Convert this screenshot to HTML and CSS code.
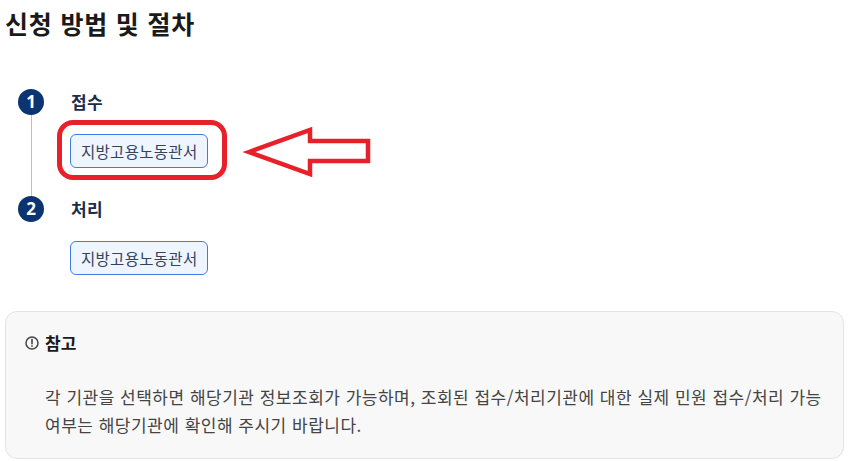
FILE: index.html
```html
<!DOCTYPE html>
<html lang="ko">
<head>
<meta charset="utf-8">
<link rel="stylesheet" href="styles.css">
</head>
<body>
<div class="page">
  <h2 class="title">신청 방법 및 절차</h2>
  <ol class="steps">
    <li class="step">
      <div class="marker"><span class="num">1</span><span class="line"></span></div>
      <div class="content">
        <div class="step-title">접수</div>
        <div class="btn-wrap">
          <button class="org">지방고용노동관서</button>
          <span class="hl-box"></span>
          <svg class="hl-arrow" width="136" height="64" viewBox="0 0 136 64">
            <polygon points="9,32 70,10 70,21 128,21 128,41 70,41 70,54" fill="none" stroke="#e8202a" stroke-width="4.5" stroke-linejoin="miter"/>
          </svg>
        </div>
      </div>
    </li>
    <li class="step last">
      <div class="marker"><span class="num">2</span></div>
      <div class="content">
        <div class="step-title">처리</div>
        <div class="btn-wrap">
          <button class="org">지방고용노동관서</button>
        </div>
      </div>
    </li>
  </ol>
  <div class="note">
    <div class="note-head">
      <svg class="note-icon" width="14" height="14" viewBox="0 0 14 14">
        <circle cx="7" cy="7" r="6" fill="none" stroke="#444" stroke-width="1.5"/>
        <line x1="7" y1="3.6" x2="7" y2="7.8" stroke="#444" stroke-width="1.6" stroke-linecap="round"/>
        <circle cx="7" cy="10.1" r="0.95" fill="#444"/>
      </svg>
      <span class="note-title">참고</span>
    </div>
    <p class="note-text">각 기관을 선택하면 해당기관 정보조회가 가능하며, 조회된 접수/처리기관에 대한 실제 민원 접수/처리 가능 여부는 해당기관에 확인해 주시기 바랍니다.</p>
  </div>
</div>
</body>
</html>
```
FILE: styles.css
```css
* { box-sizing: border-box; }
html, body { margin: 0; padding: 0; background: #fff; }
body {
  font-family: "Noto Sans CJK KR", "Noto Sans", sans-serif;
  color: #222;
}
.page {
  padding: 6px 4px 0 5px;
}
.title {
  margin: 0;
  font-size: 25px;
  line-height: 34px;
  font-weight: 700;
  color: #1a1a1a;
  letter-spacing: 0.8px;
}
.steps {
  list-style: none;
  margin: 49px 0 0 0;
  padding: 0 0 0 13px;
}
.step {
  display: flex;
  padding-bottom: 28px;
}
.step.last { padding-bottom: 0; }
.marker {
  width: 26px;
  display: flex;
  flex-direction: column;
  align-items: center;
  flex-shrink: 0;
}
.num {
  width: 26px;
  height: 26px;
  border-radius: 50%;
  background: #0b3470;
  color: #fff;
  font-weight: 700;
  font-size: 17px;
  line-height: 26px;
  text-align: center;
  font-family: "Noto Sans", "Noto Sans CJK KR", sans-serif;
}
.line {
  flex: 1;
  width: 1px;
  background: #b9c1cc;
  margin-bottom: -28px;
}
.content {
  margin-left: 27px;
}
.step-title {
  height: 26px;
  line-height: 26px;
  font-size: 17px;
  font-weight: 700;
  color: #1b2b4c;
  letter-spacing: 0.3px;
}
.btn-wrap {
  position: relative;
  margin-top: 19px;
  margin-left: -1px;
  display: inline-block;
}
.org {
  display: block;
  height: 34px;
  padding: 0 10px;
  border: 1px solid #3f7de3;
  border-radius: 6px;
  background: #eef5ff;
  color: #34435f;
  font-family: "Noto Sans CJK KR", sans-serif;
  font-size: 15.5px;
  letter-spacing: 0.3px;
  line-height: 32px;
}
.hl-box {
  position: absolute;
  left: -13px;
  top: -14px;
  right: -19px;
  bottom: -12px;
  border: 5px solid #e8202a;
  border-radius: 16px;
}
.hl-arrow {
  position: absolute;
  left: 170px;
  top: -14px;
}
.note {
  margin-top: 36px;
  border: 1px solid #e3e3e3;
  border-radius: 12px;
  background: #f8f8f8;
  padding: 18px 19px 19px 19px;
  height: 148px;
}
.note-head {
  display: flex;
  align-items: center;
  height: 26px;
}
.note-icon { margin-right: 6px; }
.note-title {
  font-size: 17px;
  font-weight: 700;
  color: #1a1a1a;
  line-height: 26px;
}
.note-text {
  margin: 27px 0 0 20px;
  font-size: 17px;
  letter-spacing: 0.5px;
  line-height: 28px;
  color: #444;
}
```
